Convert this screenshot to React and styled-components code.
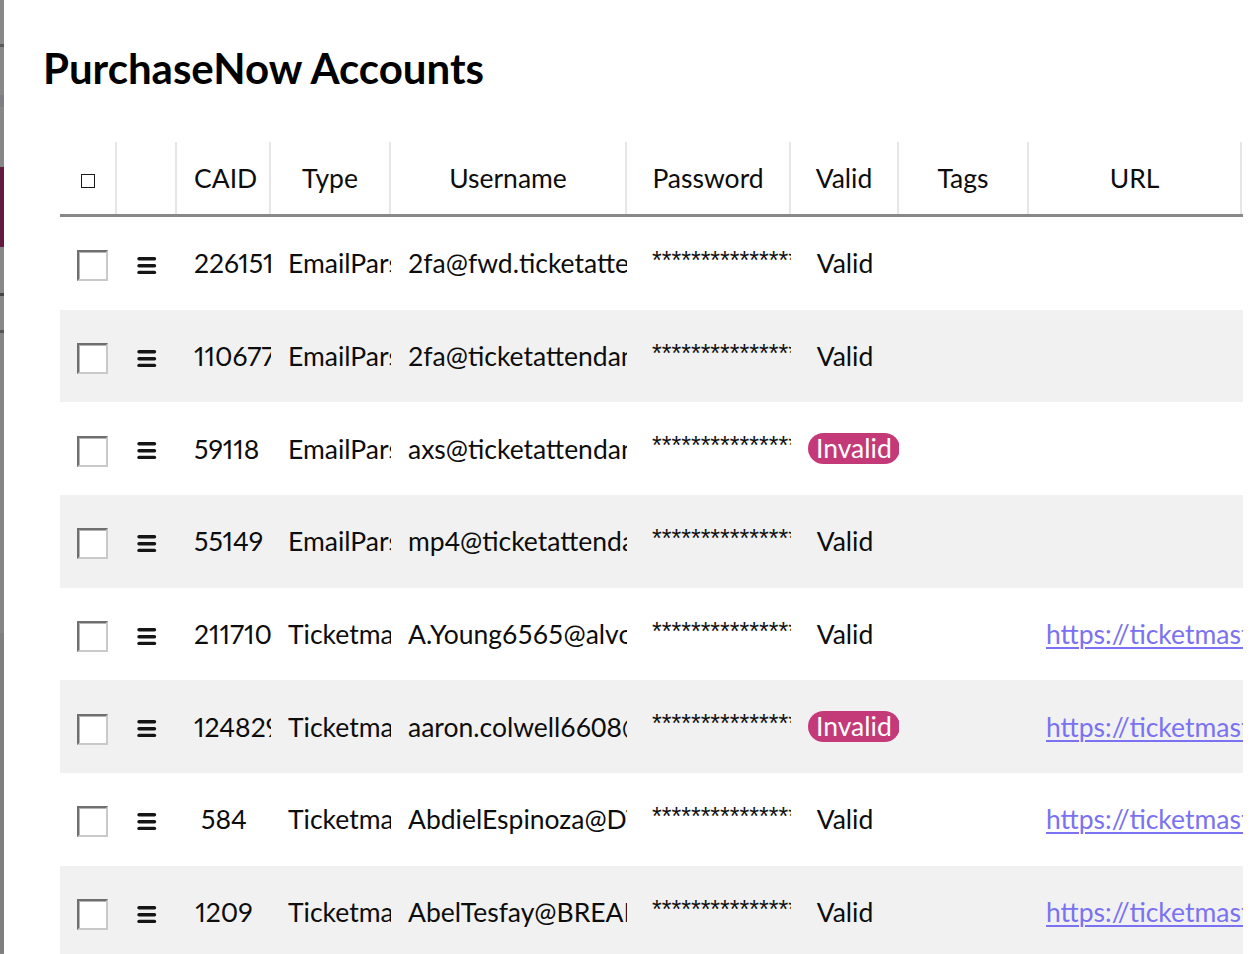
import React from "react";
import styled, { createGlobalStyle } from "styled-components";

const GlobalStyle = createGlobalStyle`
  html, body {
    margin: 0;
    padding: 0;
    height: 100%;
    overflow: hidden;
    background: #888888;
  }
  body {
    font-family: Lato, "Noto Sans", sans-serif;
    color: #0d0d0d;
  }
`;

const Page = styled.div`
  display: flex;
  height: 100vh;
  overflow: hidden;
`;

const Backdrop = styled.div`
  width: 4px;
  flex: 0 0 4px;
  display: flex;
  flex-direction: column;
  background: #878787;
`;

const BackdropBit = styled.div`
  height: ${(p) => p.$h}px;
  background: ${(p) => p.$c};
`;

const Modal = styled.div`
  flex: 1;
  background: #ffffff;
  padding: 44px 0 0 39px;
  overflow: hidden;
`;

const Title = styled.h1`
  margin: 0 0 49px 0;
  font-family: Lato, "Noto Sans", sans-serif;
  font-weight: 700;
  font-size: 42px;
  line-height: 49px;
  color: #000;
`;

const Table = styled.div`
  margin-left: 17px;
  width: 1183px;
`;

const cols = "57px 60px 94px 120px 236px 164px 108px 130px 214px";

const HeaderRow = styled.div`
  display: grid;
  grid-template-columns: ${cols};
  height: 72px;
  border-bottom: 3px solid #888888;
`;

const HeaderCell = styled.div`
  display: flex;
  align-items: center;
  justify-content: safe center;
  padding: 0 17px;
  border-right: 2px solid #e6e6e6;
  font-size: 26.5px;
  white-space: nowrap;
  overflow: hidden;
  min-width: 0;
  margin-right: ${(p) => (p.$last ? "1px" : "0")};
`;

const Row = styled.div`
  display: grid;
  grid-template-columns: ${cols};
  height: 92.7px;
  background: ${(p) => (p.$striped ? "#f1f1f1" : "#ffffff")};
`;

const Cell = styled.div`
  display: flex;
  align-items: center;
  justify-content: safe center;
  padding: 0 17px 0 ${(p) => p.$pl || 17}px;
  font-size: 26.5px;
  white-space: nowrap;
  overflow: hidden;
  min-width: 0;
`;

const Num = styled.span`
  font-variant-numeric: proportional-nums;
  font-feature-settings: "pnum" 1;
`;

const HeadBox = styled.span`
  display: inline-block;
  width: 12px;
  height: 12px;
  border: 1.6px solid #1a1a1a;
  margin-top: 5px;
`;

const RowBox = styled.span`
  display: inline-block;
  flex: 0 0 auto;
  box-sizing: border-box;
  width: 31px;
  height: 31px;
  margin-top: 5px;
  background: #fff;
  border: 2px solid;
  border-color: #6f6f6f #c9c9c9 #c9c9c9 #6f6f6f;
  box-shadow: inset 1px 1px 0 #b4b4b4;
`;

const Handle = styled.svg`
  flex: 0 0 auto;
  margin-top: 5px;
`;

const Stars = styled.span`
  font-family: "Liberation Sans", Arial, sans-serif;
  font-size: 25px;
  align-self: flex-start;
  margin-top: 31px;
  line-height: 1;
  color: #111;
`;

const Badge = styled.span`
  display: inline-block;
  flex: 0 0 auto;
  background: #c43a79;
  color: #fff;
  border-radius: 16px;
  padding: 0 8px;
  height: 31px;
  line-height: 31px;
  font-size: 26.5px;
`;

const Link = styled.a`
  color: #7a72f2;
  text-decoration: underline;
  text-decoration-thickness: 2px;
  text-underline-offset: 3px;
`;

const HamburgerIcon = () => (
  <Handle width="20" height="18" viewBox="0 0 20 18" aria-hidden="true">
    <g stroke="#151515" strokeWidth="3.4" strokeLinecap="round">
      <line x1="2" y1="1.8" x2="17.5" y2="1.8" />
      <line x1="2" y1="8.8" x2="17.5" y2="8.8" />
      <line x1="2" y1="15.4" x2="17.5" y2="15.4" />
    </g>
  </Handle>
);

const rows = [
  { id: "226151", type: "EmailParser", user: "2fa@fwd.ticketattendant.com", valid: true, url: "" },
  { id: "110677", type: "EmailParser", user: "2fa@ticketattendant.com", valid: true, url: "" },
  { id: "59118", type: "EmailParser", user: "axs@ticketattendant.com", valid: false, url: "" },
  { id: "55149", type: "EmailParser", user: "mp4@ticketattendant.com", valid: true, url: "" },
  { id: "211710", type: "Ticketmaster", user: "A.Young6565@alvoradopartners.com", valid: true, url: "https://ticketmaster.com" },
  { id: "124829", type: "Ticketmaster", user: "aaron.colwell6608@gmail.com", valid: false, url: "https://ticketmaster.com" },
  { id: "584", type: "Ticketmaster", user: "AbdielEspinoza@DTIX.com", valid: true, url: "https://ticketmaster.com" },
  { id: "1209", type: "Ticketmaster", user: "AbelTesfay@BREAKTIX.com", valid: true, url: "https://ticketmaster.com" },
];

const headers = ["CAID", "Type", "Username", "Password", "Valid", "Tags", "URL"];

const backdrop = [
  [44, "#888888"],
  [3, "#5a5a5a"],
  [48, "#888888"],
  [12, "#7e7e84"],
  [60, "#878787"],
  [80, "#641a40"],
  [46, "#888888"],
  [3, "#444444"],
  [34, "#888888"],
  [3, "#555555"],
  [300, "#868686"],
  [320, "#7f7f7f"],
];

export default function App() {
  return (
    <>
      <GlobalStyle />
      <Page>
        <Backdrop>
          {backdrop.map(([h, c], i) => (
            <BackdropBit key={i} $h={h} $c={c} />
          ))}
        </Backdrop>
        <Modal>
          <Title>PurchaseNow Accounts</Title>
          <Table>
            <HeaderRow>
              <HeaderCell>
                <HeadBox />
              </HeaderCell>
              <HeaderCell />
              {headers.map((h, i) => (
                <HeaderCell key={h} $last={i === headers.length - 1}>
                  {h}
                </HeaderCell>
              ))}
            </HeaderRow>
            {rows.map((r, i) => (
              <Row key={r.id} $striped={i % 2 === 1}>
                <Cell>
                  <RowBox />
                </Cell>
                <Cell>
                  <HamburgerIcon />
                </Cell>
                <Cell>
                  <Num>{r.id}</Num>
                </Cell>
                <Cell>{r.type}</Cell>
                <Cell>{r.user}</Cell>
                <Cell $pl={25}>
                  <Stars>***************</Stars>
                </Cell>
                <Cell>{r.valid ? "Valid" : <Badge>Invalid</Badge>}</Cell>
                <Cell />
                <Cell>{r.url ? <Link href="#">{r.url}</Link> : null}</Cell>
              </Row>
            ))}
          </Table>
        </Modal>
      </Page>
    </>
  );
}
